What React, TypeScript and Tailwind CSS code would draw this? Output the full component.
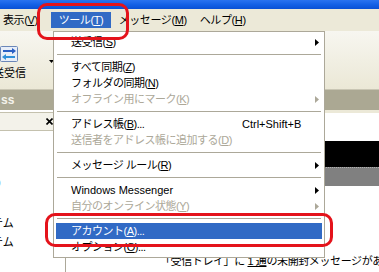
import React from 'react';

type Item =
  | 'sep'
  | { t: string; k?: string; dots?: boolean; sc?: string; arrow?: boolean; dis?: boolean; hl?: boolean };

const items: Item[] = [
  { t: '送受信', k: 'S', arrow: true },
  'sep',
  { t: 'すべて同期', k: 'Z' },
  { t: 'フォルダの同期', k: 'N' },
  { t: 'オフライン用にマーク', k: 'K', dis: true, arrow: true },
  'sep',
  { t: 'アドレス帳', k: 'B', dots: true, sc: 'Ctrl+Shift+B' },
  { t: '送信者をアドレス帳に追加する', k: 'D', dis: true },
  'sep',
  { t: 'メッセージ ルール', k: 'R', arrow: true },
  'sep',
  { t: 'Windows Messenger', arrow: true },
  { t: '自分のオンライン状態', k: 'Y', dis: true, arrow: true },
  'sep',
  { t: 'アカウント', k: 'A', dots: true, hl: true },
  { t: 'オプション', k: 'O', dots: true },
];

const SubArrow = ({ color }: { color: string }) => (
  <svg width="4" height="7" viewBox="0 0 4 7" className="absolute right-[3px] top-[5px]">
    <polygon points="0,0 4,3.5 0,7" fill={color} />
  </svg>
);

const SendRecvIcon = () => (
  <svg width="18" height="16" viewBox="0 0 18 16">
    <rect x="0.5" y="0.5" width="17" height="15" rx="1" fill="#e8eef8" stroke="#6b87b8" />
    <path d="M3 5h9" stroke="#2a5fc4" strokeWidth="2" />
    <polygon points="12,2 16,5 12,8" fill="#2a5fc4" />
    <path d="M6 11h9" stroke="#2f8fd8" strokeWidth="2" />
    <polygon points="6,8 2,11 6,14" fill="#2f8fd8" />
  </svg>
);

const Envelope = () => (
  <svg width="13" height="10" viewBox="0 0 13 10">
    <rect x="0.5" y="0.5" width="12" height="9" fill="#f4f1e4" stroke="#5a5a50" />
    <path d="M0.5 0.5 L6.5 5.5 L12.5 0.5" fill="none" stroke="#5a5a50" />
  </svg>
);

export default function App() {
  return (
    <div className="relative w-[379px] h-[272px] overflow-hidden bg-white text-black font-['Liberation_Sans','Noto_Sans_CJK_JP',sans-serif] text-[11px] leading-none">
      {/* title bar */}
      <div className="h-[9px] bg-linear-to-b from-[#2a73f0] via-[#1461e6] to-[#0a50d4]" />

      {/* menu bar */}
      <div className="h-[22px] bg-[#ece9d8] flex items-center tracking-[-0.4px]">
        <span className="ml-[3px]">
          表示(<u>V</u>)
        </span>
        <div className="ml-[13px] h-[16px] w-[60px] bg-[#316ac5] text-white flex items-center pl-[8px]">
          ツール(<u>T</u>)
        </div>
        <span className="ml-[8px]">
          メッセージ(<u>M</u>)
        </span>
        <span className="ml-[13px]">
          ヘルプ(<u>H</u>)
        </span>
      </div>

      {/* toolbar */}
      <div className="h-[58px] bg-linear-to-b from-[#f7f6f0] to-[#ebe8d6] overflow-hidden flex items-start pt-[15px]">
        <div className="w-[40px] flex flex-col">
          <SendRecvIcon />
          <span className="-ml-[7px] mt-[6px] whitespace-nowrap text-[11px]">送受信</span>
        </div>
        <svg width="5" height="3" viewBox="0 0 5 3" className="ml-[9px] mt-[14px]">
          <polygon points="0,0 5,0 2.5,3" fill="#000" />
        </svg>
      </div>

      {/* info bar */}
      <div className="h-[21px] bg-[#aba893] border-t border-[#c9c6b4] flex items-center">
        <span className="text-[#f4f3ec] font-bold text-[12px] pl-[1px]">ss</span>
      </div>

      {/* panes */}
      <div className="flex h-[162px]">
        <div className="w-[66px] shrink-0 border-r border-[#aca899] flex flex-col">
          <div className="h-[19px] mt-[2px] bg-[#f3f2ea] border-y border-[#c4c1ae] flex items-center justify-end pr-[12px]">
            <svg width="7" height="7" viewBox="0 0 7 7">
              <path d="M0.5 0.5 L6.5 6.5 M6.5 0.5 L0.5 6.5" stroke="#000" strokeWidth="1.6" />
            </svg>
          </div>
          <div className="flex flex-col overflow-hidden">
            <div className="h-[16px] mt-[43px] flex items-center whitespace-nowrap -ml-[3px]">)</div>
            <div className="h-[19px] mt-[24px] flex items-center whitespace-nowrap -ml-[8px]">テム</div>
            <div className="h-[19px] flex items-center whitespace-nowrap -ml-[8px]">テム</div>
          </div>
        </div>
        <div className="flex-1 min-w-0 overflow-hidden flex flex-col">
          <div className="h-[3px] bg-[#ece9d8]" />
          <div className="h-[28px] bg-white" />
          <div className="h-[26px] bg-black" />
          <div className="h-[19px] bg-[#808080] border-t border-dotted border-[#b0b0b0]" />
          <div className="flex items-center pl-[91px] mt-[68px] h-[14px] whitespace-nowrap tracking-[-0.4px]">
            <Envelope />
            <span className="ml-[3px]">
              「受信トレイ」に <u>1 通</u>の未開封メッセージがあります
            </span>
          </div>
        </div>
      </div>

      {/* dropdown menu */}
      <div className="absolute left-[53px] top-[31px] w-[272px] bg-white border border-[#aca899] p-[2px]">
        {items.map((it, i) =>
          it === 'sep' ? (
            <div key={i} className="h-[9px] flex items-center px-[1px]">
              <div className="w-full h-px bg-[#aca899]" />
            </div>
          ) : (
            <div
              key={i}
              className={`relative h-[16px] flex items-center pl-[15px] whitespace-nowrap ${
                it.hl ? 'bg-[#316ac5] text-white' : it.dis ? 'text-[#aca899]' : 'text-black'
              }`}
            >
              <span className={/^[\x00-\x7f]+$/.test(it.t) ? '' : 'tracking-[-0.5px]'}>
                {it.t}
                {it.k && (
                  <>
                    (<u>{it.k}</u>)
                  </>
                )}
                {it.dots && '...'}
              </span>
              {it.sc && <span className="absolute left-[186px]">{it.sc}</span>}
              {it.arrow && <SubArrow color={it.dis ? '#aca899' : '#000'} />}
            </div>
          )
        )}
      </div>

      {/* red rings */}
      <div className="absolute left-[37px] top-[3px] w-[92px] h-[37px] border-[3px] border-[#e4131b] rounded-[10px]" />
      <div className="absolute left-[45px] top-[213px] w-[288px] h-[34px] border-[3px] border-[#e4131b] rounded-[10px]" />
    </div>
  );
}
